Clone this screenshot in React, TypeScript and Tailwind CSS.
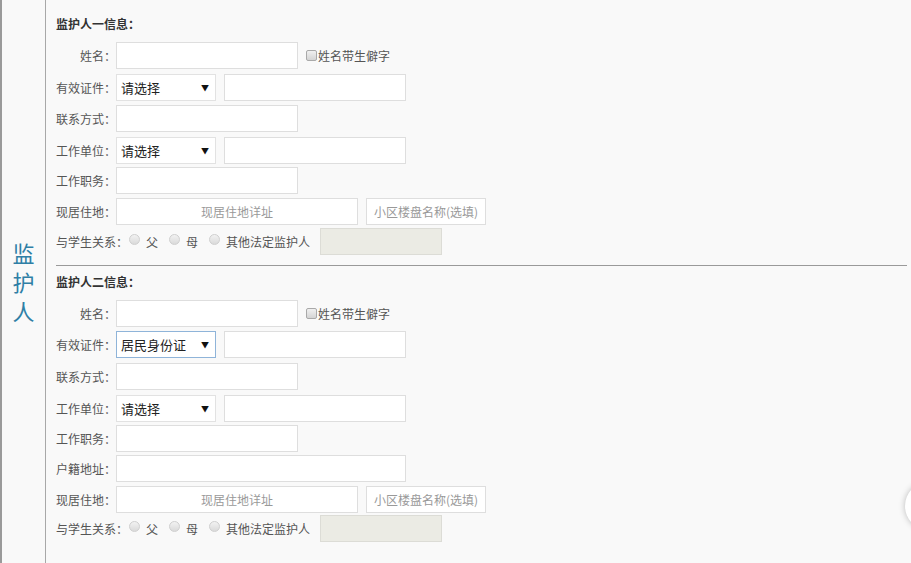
import React from "react";

const font = "font-['Microsoft_YaHei','Noto_Sans_CJK_SC',sans-serif]";

function Label({ text, wide }: { text: string; wide?: boolean }) {
  return (
    <span
      className={
        (wide ? "w-[72px]" : "w-[60px]") +
        " shrink-0 text-right text-[12px] leading-none text-[#555]"
      }
    >
      {text}
    </span>
  );
}

function Box({ w, ph, center }: { w: string; ph?: string; center?: boolean }) {
  return (
    <div
      className={
        w +
        " flex h-[27px] items-center border border-[#dedede] bg-white px-[6px] text-[12px] text-[#999] " +
        (center ? "justify-center" : "")
      }
    >
      {ph}
    </div>
  );
}

function Select({ value, focused }: { value: string; focused?: boolean }) {
  return (
    <div
      className={
        "flex h-[27px] w-[100px] items-center justify-between border bg-white pl-[4px] pr-[6px] " +
        (focused ? "border-[#8fb4d9]" : "border-[#e2e2e2]")
      }
    >
      <span className="text-[13px] leading-none text-[#222]">{value}</span>
      <span className="text-[8px] leading-none text-[#111]">▼</span>
    </div>
  );
}

function Checkbox() {
  return (
    <span className="ml-[8px] mr-[1px] inline-block h-[11px] w-[11px] rounded-[2px] border border-[#a9a9a9] bg-gradient-to-b from-[#f0f0f0] to-[#d4d4d4]" />
  );
}

function Radio() {
  return (
    <span className="inline-block h-[11px] w-[11px] -translate-y-[2px] rounded-full border border-[#cfcfcf] bg-gradient-to-b from-[#f2f2f2] to-[#dadada]" />
  );
}

function NameRow({ mt }: { mt: string }) {
  return (
    <div className={mt + " flex h-[27px] items-center"}>
      <Label text="姓名：" />
      <Box w="w-[182px]" />
      <Checkbox />
      <span className="text-[12px] leading-none text-[#555]">姓名带生僻字</span>
    </div>
  );
}

function SelectRow({ mt, label, value, focused }: { mt: string; label: string; value: string; focused?: boolean }) {
  return (
    <div className={mt + " flex h-[27px] items-center"}>
      <Label text={label} />
      <Select value={value} focused={focused} />
      <div className="ml-[8px]">
        <Box w="w-[182px]" />
      </div>
    </div>
  );
}

function InputRow({ mt, label, w }: { mt: string; label: string; w: string }) {
  return (
    <div className={mt + " flex h-[27px] items-center"}>
      <Label text={label} />
      <Box w={w} />
    </div>
  );
}

function AddressRow({ mt }: { mt: string }) {
  return (
    <div className={mt + " flex h-[27px] items-center"}>
      <Label text="现居住地：" />
      <Box w="w-[242px]" ph="现居住地详址" center />
      <div className="ml-[8px]">
        <Box w="w-[120px]" ph="小区楼盘名称(选填)" center />
      </div>
    </div>
  );
}

function RelationRow({ mt }: { mt: string }) {
  return (
    <div className={mt + " flex h-[27px] items-center text-[12px] leading-none text-[#555]"}>
      <Label text="与学生关系：" wide />
      <span className="ml-[1px]"><Radio /></span>
      <span className="ml-[6px]">父</span>
      <span className="ml-[11px]"><Radio /></span>
      <span className="ml-[6px]">母</span>
      <span className="ml-[11px]"><Radio /></span>
      <span className="ml-[6px]">其他法定监护人</span>
      <div className="ml-[10px] h-[27px] w-[122px] border border-[#dcdcd6] bg-[#ebebe4]" />
    </div>
  );
}

function Header({ mt, text }: { mt: string; text: string }) {
  return (
    <div className={mt + " h-[14px] text-[12px] font-bold leading-[14px] text-[#333]"}>{text}</div>
  );
}

export default function App() {
  return (
    <div className={font + " relative flex h-[563px] w-[911px] overflow-hidden bg-[#f9f9f9]"}>
      <div className="flex w-[46px] shrink-0 items-center justify-center border-l-2 border-r border-l-[#9a9a9a] border-r-[#a8a8a8]">
        <div className="flex flex-col items-center text-[22px] leading-[29px] text-[#2f7fa6]">
          <span>监</span>
          <span>护</span>
          <span>人</span>
        </div>
      </div>
      <div className="flex-1 pl-[10px] pr-[4px]">
        <Header mt="mt-[17px]" text="监护人一信息：" />
        <NameRow mt="mt-[11px]" />
        <SelectRow mt="mt-[5px]" label="有效证件：" value="请选择" />
        <InputRow mt="mt-[4px]" label="联系方式：" w="w-[182px]" />
        <SelectRow mt="mt-[5px]" label="工作单位：" value="请选择" />
        <InputRow mt="mt-[3px]" label="工作职务：" w="w-[182px]" />
        <AddressRow mt="mt-[4px]" />
        <RelationRow mt="mt-[3px]" />
        <div className="mt-[10px] border-t border-[#9a9a9a]" />
        <Header mt="mt-[9px]" text="监护人二信息：" />
        <NameRow mt="mt-[11px]" />
        <SelectRow mt="mt-[4px]" label="有效证件：" value="居民身份证" focused />
        <InputRow mt="mt-[5px]" label="联系方式：" w="w-[182px]" />
        <SelectRow mt="mt-[5px]" label="工作单位：" value="请选择" />
        <InputRow mt="mt-[3px]" label="工作职务：" w="w-[182px]" />
        <InputRow mt="mt-[3px]" label="户籍地址：" w="w-[290px]" />
        <AddressRow mt="mt-[4px]" />
        <RelationRow mt="mt-[2px]" />
      </div>
      <div className="absolute left-[905px] top-[482px] h-[48px] w-[48px] rounded-full bg-white shadow-[0_0_6px_rgba(0,0,0,0.25)]" />
    </div>
  );
}
